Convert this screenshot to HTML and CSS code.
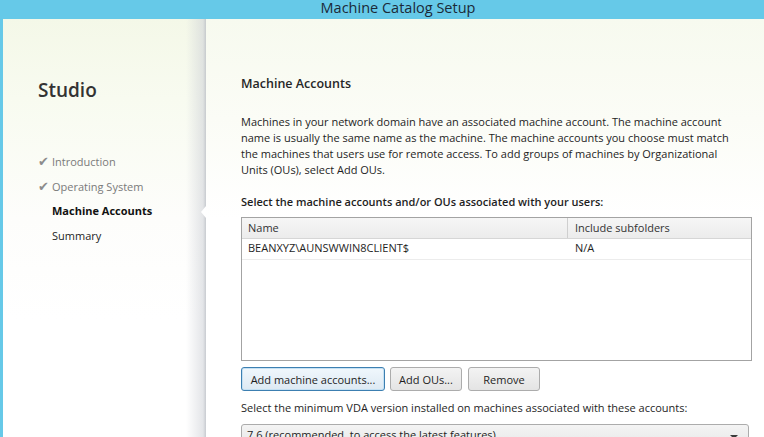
FILE: index.html
```html
<!DOCTYPE html>
<html>
<head>
<meta charset="utf-8">
<link rel="stylesheet" href="styles.css">
</head>
<body>
<div class="window">
  <div class="titlebar">Machine Catalog Setup</div>
  <div class="frame">
    <aside class="sidebar">
      <div class="brand">Studio</div>
      <ul class="steps">
        <li class="done"><span class="check">✔</span>Introduction</li>
        <li class="done"><span class="check">✔</span>Operating System</li>
        <li class="current">Machine Accounts</li>
        <li>Summary</li>
      </ul>
      <span class="pointer"></span>
    </aside>
    <main class="main">
      <h1 class="heading">Machine Accounts</h1>
      <p class="intro">Machines in your network domain have an associated machine account. The machine account name is usually the same name as the machine. The machine accounts you choose must match the machines that users use for remote access. To add groups of machines by Organizational Units (OUs), select Add OUs.</p>
      <p class="label-bold">Select the machine accounts and/or OUs associated with your users:</p>
      <div class="table">
        <div class="thead">
          <div class="col-name">Name</div>
          <div class="col-sub">Include subfolders</div>
        </div>
        <div class="trow">
          <div class="col-name">BEANXYZ\AUNSWWIN8CLIENT$</div>
          <div class="col-sub">N/A</div>
        </div>
      </div>
      <div class="buttons">
        <button class="btn focused">Add machine accounts...</button>
        <button class="btn btn-ou">Add OUs...</button>
        <button class="btn btn-remove">Remove</button>
      </div>
      <p class="label">Select the minimum VDA version installed on machines associated with these accounts:</p>
      <div class="select">
        <span>7.6 (recommended, to access the latest features)</span>
        <span class="arrow"></span>
      </div>
    </main>
  </div>
</div>
</body>
</html>
```
FILE: styles.css
```css
html, body {
  margin: 0;
  padding: 0;
}
body {
  width: 764px;
  height: 437px;
  overflow: hidden;
  background: #66c9e8;
  font-family: "Open Sans", "Noto Sans", sans-serif;
  font-size: 11px;
  color: #1e1e1e;
}
.window {
  width: 796px;
  height: 437px;
  display: flex;
  flex-direction: column;
}
.titlebar {
  height: 19px;
  line-height: 16px;
  text-align: center;
  font-size: 14.5px;
  color: #1b2a38;
  background: #66c9e8;
  flex: none;
  overflow: visible;
}
.frame {
  flex: 1;
  display: flex;
  margin-left: 3px;
  background: #ffffff;
}
.sidebar {
  position: relative;
  width: 203px;
  flex: none;
  padding-top: 59px;
  box-sizing: border-box;
  background:
    linear-gradient(to right, rgba(255,255,255,0) 0px, rgba(255,255,255,0) 183px, rgba(205,208,214,0.55) 200px, rgba(190,194,200,0.85) 203px),
    linear-gradient(to bottom, #f4f8e8 0px, #f8fbf0 80px, #fdfdfb 200px, #ffffff 300px);
}
.brand {
  margin-left: 35px;
  font-size: 19px;
  line-height: 24px;
  font-weight: 600;
  color: #333333;
}
.steps {
  list-style: none;
  margin: 48px 0 0 0;
  padding: 0 0 0 35px;
}
.steps li {
  height: 24.6px;
  line-height: 24.6px;
  padding-left: 14px;
  position: relative;
  color: #1e1e1e;
  white-space: nowrap;
}
.steps li.done {
  color: #7a7a7a;
}
.steps li.current {
  font-weight: 700;
  color: #111111;
}
.check {
  position: absolute;
  left: 0;
  top: 0;
  font-size: 12.5px;
  color: #8c8c8c;
}
.pointer {
  position: absolute;
  right: 0;
  top: 187px;
  width: 0;
  height: 0;
  border-top: 6px solid transparent;
  border-bottom: 6px solid transparent;
  border-right: 5px solid #ffffff;
}
.main {
  flex: 1;
  padding: 56px 0 0 35px;
  background: linear-gradient(to bottom, #f7faef 0px, #fbfcf6 100px, #ffffff 200px);
}
.heading {
  margin: 0;
  font-size: 12.5px;
  line-height: 18px;
  font-weight: 600;
  color: #262626;
}
.intro {
  margin: 21px 0 0 0;
  width: 494px;
  line-height: 16px;
}
.label-bold {
  margin: 16px 0 0 0;
  font-weight: 600;
  line-height: 16px;
}
.table {
  margin-top: 7px;
  width: 511px;
  height: 144px;
  box-sizing: border-box;
  border: 1px solid #a3a3a3;
  background: #ffffff;
}
.thead, .trow {
  display: flex;
  height: 20px;
  line-height: 19px;
}
.thead {
  background: linear-gradient(to bottom, #f6f6f6, #ececec);
  border-bottom: 1px solid #d6d6d6;
  color: #333333;
}
.trow {
  border-bottom: 1px solid #ececec;
  line-height: 17px;
}
.col-name {
  width: 325px;
  padding-left: 6px;
  box-sizing: border-box;
}
.col-sub {
  flex: 1;
  padding-left: 7px;
}
.thead .col-sub {
  border-left: 1px solid #cfcfcf;
}
.trow .col-sub {
  padding-left: 8px;
}
.buttons {
  display: flex;
  margin-top: 6px;
  gap: 5px;
}
.btn {
  height: 24px;
  box-sizing: border-box;
  font-family: inherit;
  font-size: 11px;
  color: #1e1e1e;
  border: 1px solid #acacac;
  border-radius: 3px;
  background: linear-gradient(to bottom, #f3f3f3, #e4e4e4);
  padding: 0 7px;
  margin: 0;
}
.btn.focused {
  width: 144px;
  border-color: #3c7fb1;
  box-shadow: inset 0 0 0 1px #c4e0f3;
  background: linear-gradient(to bottom, #f0f7fc, #dde9f3);
}
.btn-ou {
  width: 72px;
}
.btn-remove {
  width: 72px;
  margin-left: 1px;
}
.label {
  margin: 9px 0 0 0;
  line-height: 16px;
}
.select {
  margin-top: 8px;
  width: 508px;
  height: 22px;
  box-sizing: border-box;
  border: 1px solid #acacac;
  border-radius: 3px;
  background: linear-gradient(to bottom, #f4f4f4, #e8e8e8);
  padding: 0 5px;
  line-height: 18px;
  display: flex;
  justify-content: space-between;
  align-items: center;
}
.arrow {
  width: 0;
  height: 0;
  border-left: 4px solid transparent;
  border-right: 4px solid transparent;
  border-top: 4px solid #3a3a3a;
  margin-right: 5px;
  margin-top: 3px;
}
```
